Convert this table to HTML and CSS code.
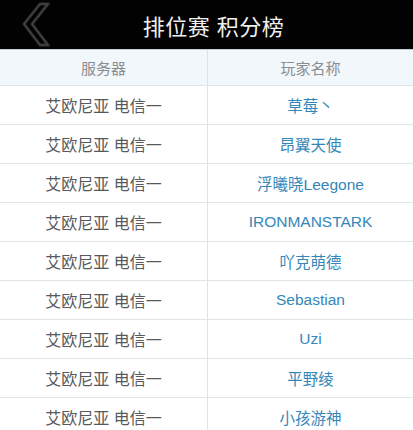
FILE: index.html
```html
<!DOCTYPE html>
<html lang="zh">
<head>
<meta charset="utf-8">
<link rel="stylesheet" href="styles.css">
</head>
<body>
<div class="topbar">
  <svg class="back" width="30" height="46" viewBox="0 0 30 46">
    <polygon points="20,3 28,3 12,23 28,44 20,44 4,23" fill="none" stroke="#2e2e2e" stroke-width="3" stroke-linejoin="miter"/>
    <polygon points="20,3 28,3 12,23 28,44 20,44 4,23" fill="none" stroke="#4a4a4a" stroke-width="1" stroke-linejoin="miter"/>
  </svg>
  <h1 class="title">排位赛 积分榜</h1>
</div>
<div class="table">
  <div class="row head">
    <div class="cell">服务器</div>
    <div class="cell">玩家名称</div>
  </div>
  <div class="row"><div class="cell server">艾欧尼亚 电信一</div><div class="cell name">草莓丶</div></div>
  <div class="row"><div class="cell server">艾欧尼亚 电信一</div><div class="cell name">昂翼天使</div></div>
  <div class="row"><div class="cell server">艾欧尼亚 电信一</div><div class="cell name">浮曦晓Leegone</div></div>
  <div class="row"><div class="cell server">艾欧尼亚 电信一</div><div class="cell name">IRONMANSTARK</div></div>
  <div class="row"><div class="cell server">艾欧尼亚 电信一</div><div class="cell name">吖克萌德</div></div>
  <div class="row"><div class="cell server">艾欧尼亚 电信一</div><div class="cell name">Sebastian</div></div>
  <div class="row"><div class="cell server">艾欧尼亚 电信一</div><div class="cell name">Uzi</div></div>
  <div class="row"><div class="cell server">艾欧尼亚 电信一</div><div class="cell name">平野绫</div></div>
  <div class="row"><div class="cell server">艾欧尼亚 电信一</div><div class="cell name">小孩游神</div></div>
</div>
</body>
</html>
```
FILE: styles.css
```css
html, body {
  margin: 0;
  padding: 0;
  background: #ffffff;
  font-family: "Liberation Sans", "Noto Sans CJK SC", sans-serif;
  overflow: hidden;
}
.topbar {
  height: 49px;
  background: #020202;
  display: flex;
  align-items: center;
  position: relative;
  border-bottom: 1px solid #c9cdd0;
}
.back {
  position: absolute;
  left: 20px;
  top: 1px;
}
.title {
  margin: 0 0 0 14px;
  flex: 1;
  text-align: center;
  color: #f0f0f0;
  font-size: 22px;
  font-weight: normal;
  letter-spacing: 0.5px;
}
.table {
  display: flex;
  flex-direction: column;
}
.row {
  display: grid;
  grid-template-columns: 208px 1fr;
  height: 38px;
  border-bottom: 1px solid #dfe4e8;
  background: #ffffff;
}
.row.head {
  height: 35px;
  background: #f1f7fb;
}
.cell {
  display: flex;
  align-items: center;
  justify-content: center;
  font-size: 15px;
}
.cell:first-child {
  border-right: 1px solid #dfe4e8;
}
.head .cell {
  color: #8a8d90;
}
.server {
  color: #58595b;
  font-size: 16px;
}
.name {
  color: #3487b8;
  font-size: 15.5px;
}
```
